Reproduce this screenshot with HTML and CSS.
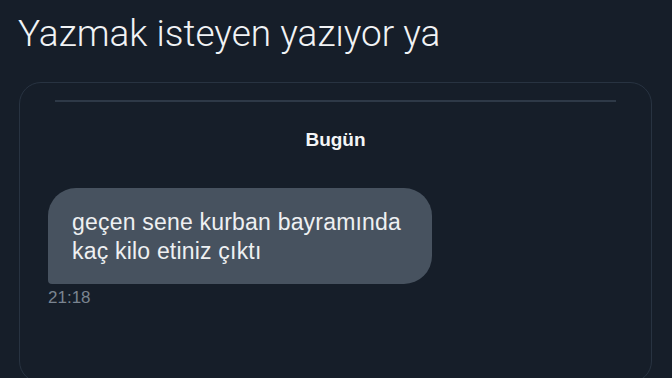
FILE: index.html
```html
<!DOCTYPE html>
<html lang="tr">

<head>
    <meta charset="UTF-8">
    <meta name="viewport" content="width=device-width, initial-scale=1.0">
    <title>Yazmak isteyen yazıyor ya</title>
    <link rel="stylesheet" href="styles.css">
</head>

<body>
    <!-- tweet metni -->
    <h1 class="tweet-text">Yazmak isteyen yazıyor ya</h1>

    <!-- DM ekran görüntüsü kartı -->
    <div class="dm-card">
        <div class="dm-divider"></div>
        <div class="dm-day">Bugün</div>

        <div class="dm-message">
            <div class="bubble">geçen sene kurban bayramında<br>kaç kilo etiniz çıktı</div>
            <div class="time">21:18</div>
        </div>
    </div>
</body>

</html>
```

FILE: styles.css
```css
body {
    margin: 0;
    padding: 0;
    background-color: #161e29;
    color: #e7e9ea;
    font-family: "Liberation Sans", Arial, sans-serif;
    height: 378px;
    overflow: hidden;
}

.tweet-text {
    margin: 0;
    padding: 12px 18px 0;
    font-family: Roboto, "Noto Sans", sans-serif;
    font-weight: 300;
    font-size: 37px;
    line-height: 44px;
    color: #f1f3f5;
}

.dm-card {
    margin: 26px 20px 0 19px;
    padding: 17px 28px 0;
    height: 282px;
    border: 1px solid #283341;
    border-radius: 22px;
}

.dm-divider {
    height: 2px;
    margin: 0 7px;
    background-color: #2e3947;
}

.dm-day {
    margin-top: 27px;
    text-align: center;
    font-weight: bold;
    font-size: 19px;
    line-height: 22px;
    color: #f4f5f6;
}

.dm-message {
    margin-top: 37px;
}

.bubble {
    width: 336px;
    padding: 20px 24px 18px;
    background-color: #47525f;
    border-radius: 28px 28px 28px 4px;
    font-size: 23px;
    line-height: 29px;
    letter-spacing: 0.2px;
    color: #eef0f2;
}

.time {
    margin-top: 5px;
    font-size: 17px;
    line-height: 18px;
    color: #7a8490;
}
```
